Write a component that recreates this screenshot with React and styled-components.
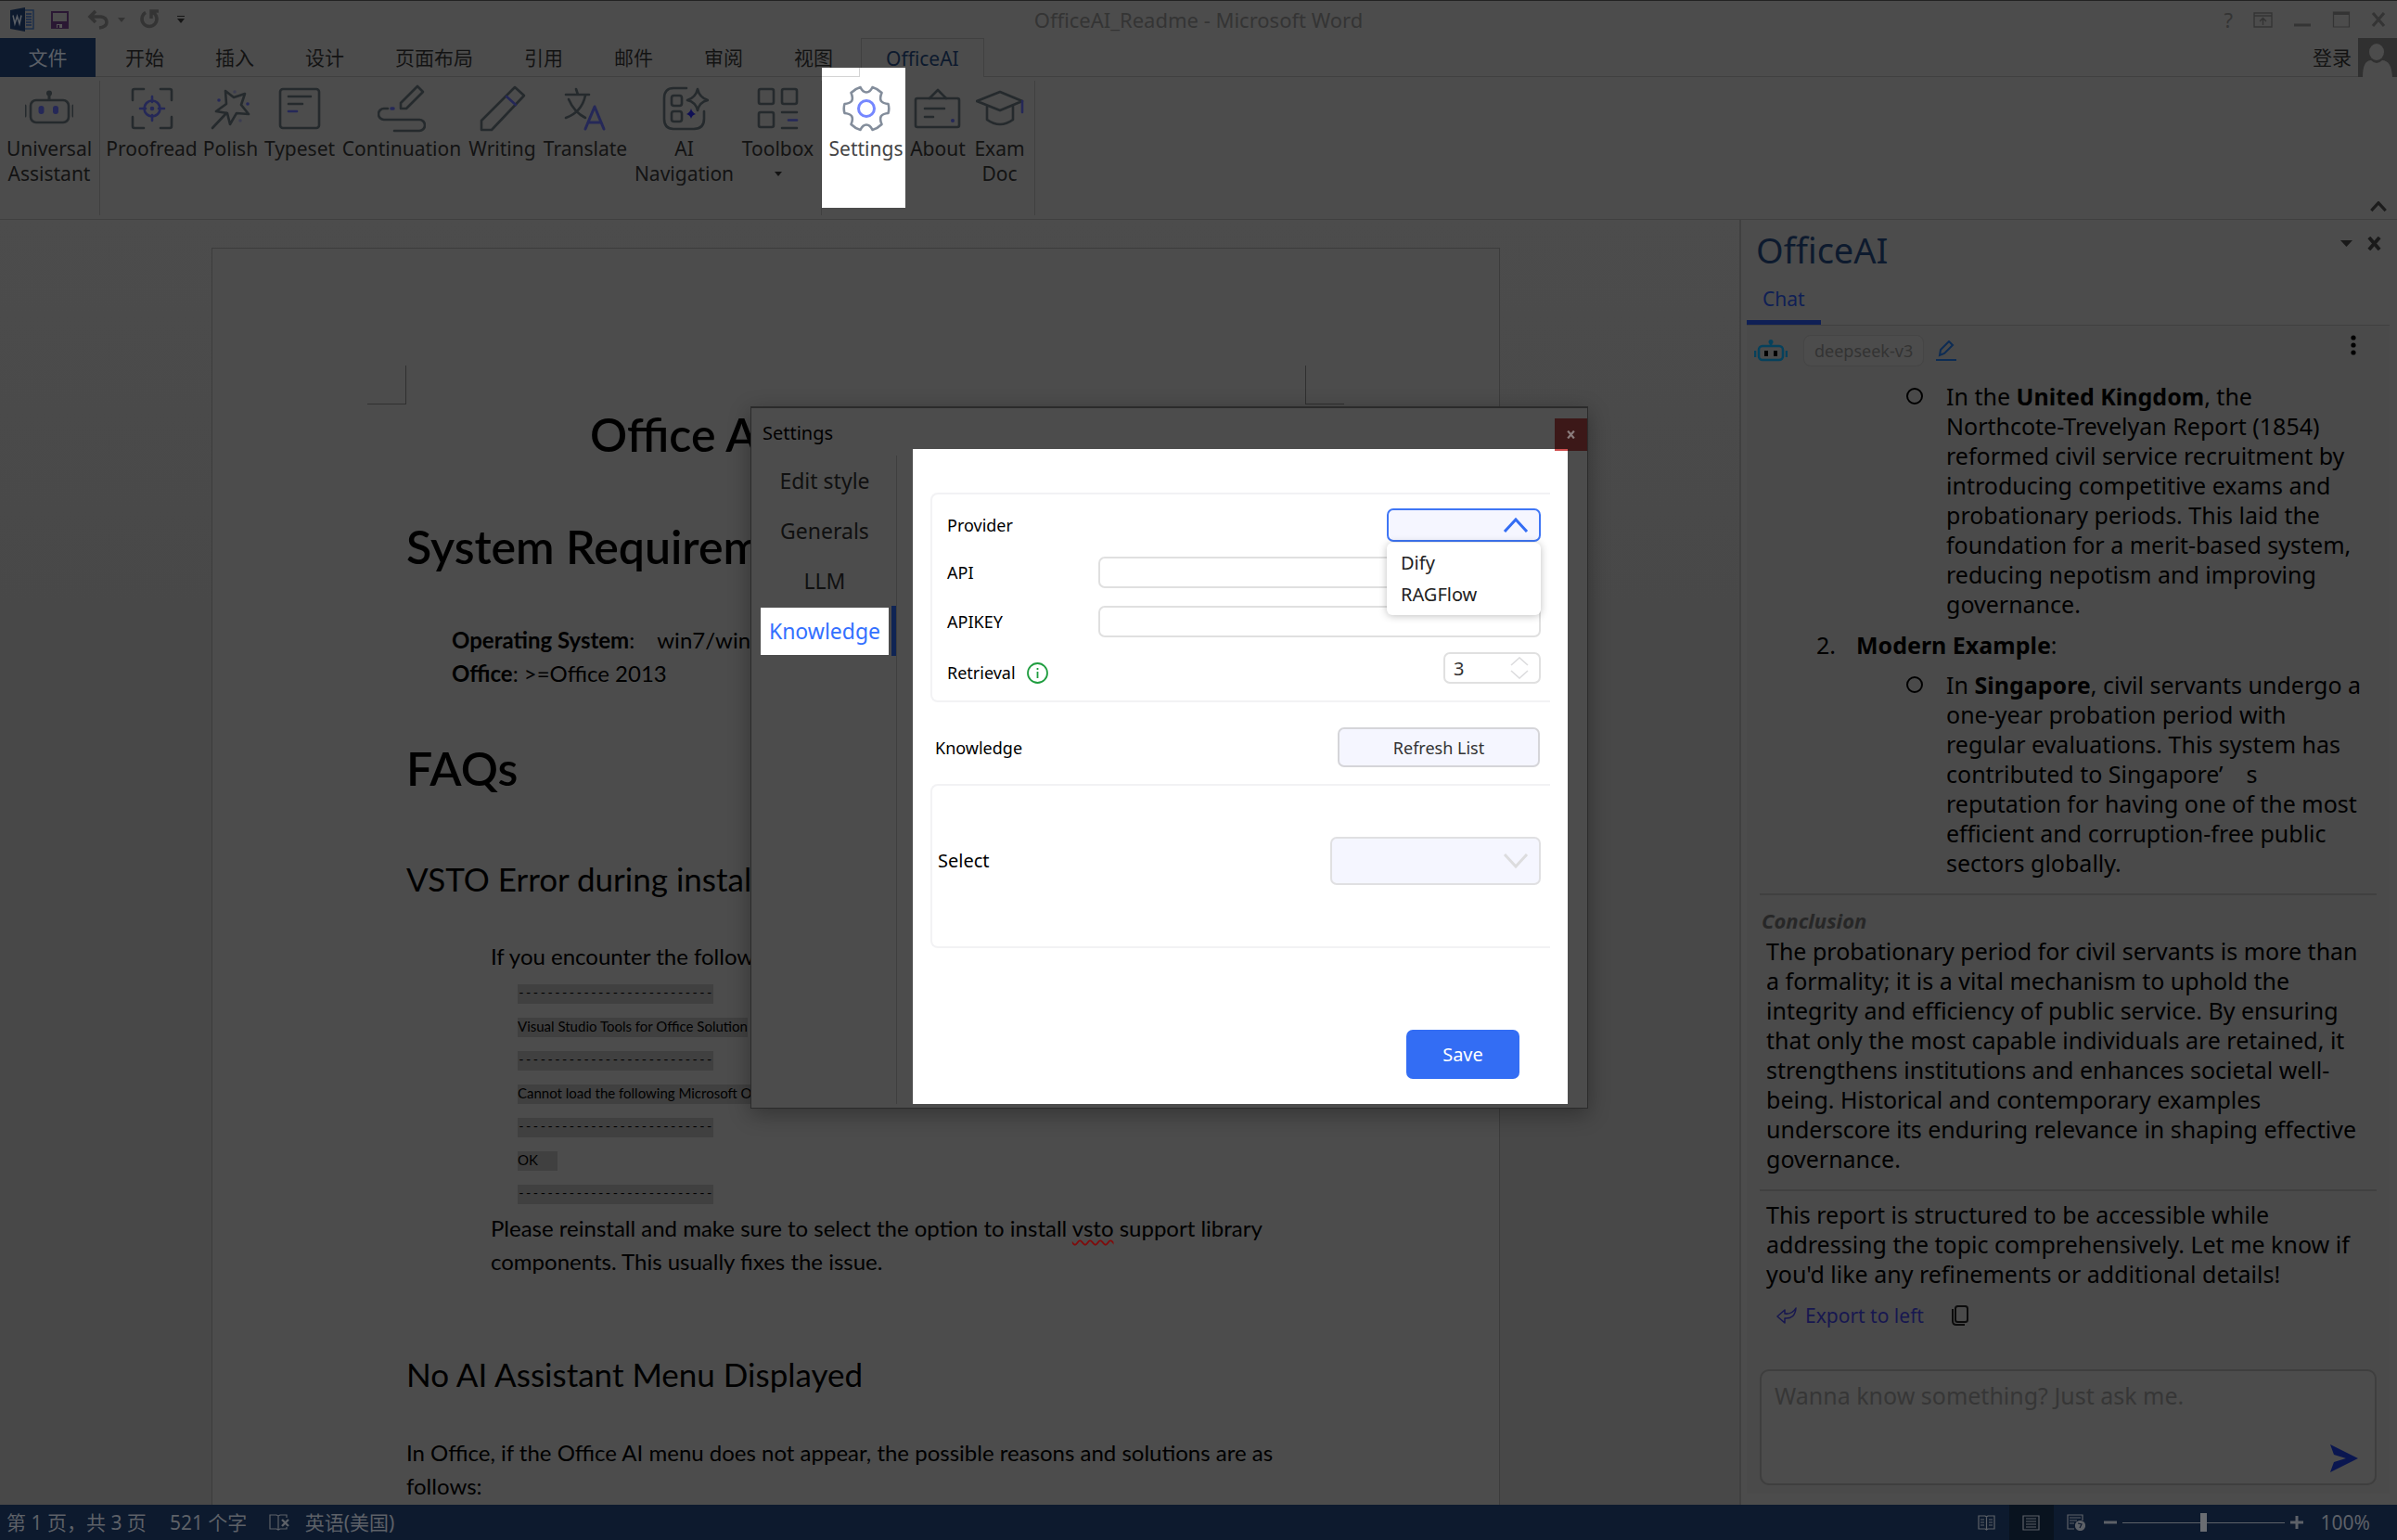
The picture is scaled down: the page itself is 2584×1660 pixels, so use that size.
import React from "react";
import styled, { createGlobalStyle, css } from "styled-components";

const UI = `"Noto Sans", "Noto Sans CJK SC", sans-serif`;
const DOC = `Lato, "Noto Sans CJK SC", sans-serif`;

const c = {
  surface: "#4c4c4c",
  line: "#404040",
  ink: "#131313",
  stroke: "#252a2d",
  accent: "#252858",
  word: "#0d1a2e",
  link: "#0f1f55",
  faint: "#333333",
  chrome: "#343434",
  statusInk: "#5d6168",
};

const GlobalStyle = createGlobalStyle`
  *, *::before, *::after { box-sizing: border-box; }
  body { margin: 0; background: ${c.surface}; font-family: ${UI}; }
  button, input, select, textarea { font: inherit; color: inherit; margin: 0; }
  button { border: 0; padding: 0; background: none; }
  h1, h2, h3, p, ul, ol { margin: 0; padding: 0; }
  ul, ol { list-style: none; }
`;

const Shell = styled.div`
  position: relative;
  display: flex;
  flex-direction: column;
  height: 100vh;
  overflow: hidden;
  border-top: 1px solid #222;
  background: ${c.surface};
  color: ${c.ink};
`;

const Svg = styled.svg`
  display: block;
  flex: none;
  fill: ${(p) => p.fill || "none"};
  stroke: ${(p) => p.stroke || "currentColor"};
  stroke-width: ${(p) => p.strokeWidth || 2};
`;

/* ---------- title bar ---------- */
const TitleBar = styled.header`
  display: grid;
  grid-template-columns: 1fr auto 1fr;
  align-items: center;
  height: 40px;
  flex: none;
  font-size: 22px;
  line-height: 28px;
  color: ${c.chrome};
`;
const QuickAccess = styled.div`
  display: flex;
  align-items: center;
  padding-left: 11px;
`;
const WindowControls = styled.div`
  display: flex;
  justify-content: flex-end;
  gap: 22px;
  padding-right: 12px;
`;
const IconButton = styled.button`
  display: flex;
  align-items: center;
  justify-content: center;
  color: ${(p) => p.$color || c.chrome};
  margin-left: ${(p) => p.$gap || 0}px;
`;

/* ---------- tabs ---------- */
const TabBar = styled.nav`
  display: flex;
  flex: none;
  height: 42px;
  border-bottom: 1px solid ${c.line};
  font-size: 21px;
  line-height: 40px;
`;
const FileTab = styled.button`
  width: 103px;
  height: 42px;
  margin-right: 5px;
  background: ${c.word};
  color: #5a5f66;
`;
const Tab = styled.button`
  padding: 0 28px 0 27px;
  height: 42px;
  ${(p) =>
    p.$active &&
    css`
      padding: 0 26px;
      margin-left: 2px;
      border: 1px solid ${c.line};
      border-bottom: 0;
      background: ${c.surface};
      color: ${c.word};
    `}
`;
const Account = styled.button`
  display: flex;
  align-items: center;
  gap: 7px;
  height: 42px;
  margin-left: auto;
`;

/* ---------- ribbon ---------- */
const Ribbon = styled.section`
  position: relative;
  display: flex;
  flex: none;
  height: 154px;
  padding: 4px 0;
  border-bottom: 1px solid ${c.line};
`;
const Group = styled.div`
  display: flex;
  align-items: flex-start;
  padding: ${(p) => p.$pad};
  border-right: 1px solid ${c.line};
`;
const Tool = styled.button`
  position: relative;
  display: flex;
  flex-direction: column;
  align-items: center;
  gap: 4px;
  width: ${(p) => p.$w}px;
  color: ${(p) => (p.$lit ? "#444" : c.ink)};
  font-size: 21px;
  line-height: 27px;
  white-space: nowrap;
  ${(p) =>
    p.$lit &&
    css`
      padding-left: 5px;
      & > * { position: relative; }
      &::before {
        content: "";
        position: absolute;
        inset: -18px 0 auto 0;
        height: 151px;
        background: #fff;
      }
      &::after {
        content: "";
        position: absolute;
        top: -18px;
        left: 0;
        width: 41px;
        height: 10px;
        border: solid #d4d4d4;
        border-width: 0 1px 1px 0;
      }
    `}
`;
const Caret = styled.span`
  width: 0;
  height: 0;
  margin-top: ${(p) => p.$top || 0}px;
  border: 4px solid transparent;
  border-top: 5px solid currentColor;
  border-bottom: 0;
`;
const Collapse = styled(IconButton)`
  margin: auto 11px 4px auto;
`;

/* ---------- workspace ---------- */
const Workspace = styled.main`
  display: flex;
  flex: 1;
  min-height: 0;
`;
const Canvas = styled.section`
  flex: 1;
  min-width: 0;
  overflow: hidden;
  padding: 30px 30px 0 0;
  display: flex;
  justify-content: center;
  background: linear-gradient(#4c4c4c, #484848 30%, #484848);
  font-family: ${DOC};
  color: #000;
`;
const Page = styled.article`
  flex: none;
  width: 1389px;
  height: 2000px;
  padding: 126px 167px 0;
  border: 1px solid #3c3c3c;
  background: ${c.surface};
`;
const CropMarks = styled.div`
  display: flex;
  justify-content: space-between;
  height: 42px;
  margin-bottom: 2px;
  &::before, &::after {
    content: "";
    width: 42px;
    border: solid #303030;
    border-width: 0 1px 1px 0;
  }
  &::after { border-width: 0 0 1px 1px; }
`;
const Body = styled.div`
  padding: 0 42px;
  font-size: 24px;
  line-height: 36px;
  font-weight: 400;
  white-space: nowrap;
  strong { font-weight: 700; }
`;
const DocTitle = styled.h1`
  padding-left: 198px;
  font-size: 50px;
  line-height: 60px;
  font-weight: 600;
`;
const Heading = styled.h2`
  margin-top: ${(p) => p.$top}px;
  font-size: 50px;
  line-height: 60px;
  font-weight: 600;
`;
const SubHeading = styled.h3`
  margin-top: ${(p) => p.$top}px;
  font-size: 35px;
  line-height: 48px;
  font-weight: 400;
`;
const Para = styled.p`
  margin-top: ${(p) => p.$top || 0}px;
  padding-left: ${(p) => p.$indent || 0}px;
`;
const CodeList = styled.ul`
  padding: 4px 0 0 120px;
  li { display: flex; align-items: center; height: 36px; }
`;
const CodeText = styled.span`
  display: block;
  min-width: 43px;
  height: 21px;
  line-height: 19px;
  background: #404040;
  font-size: ${(p) => (p.$dashes ? 13 : 15)}px;
  font-family: ${(p) => (p.$dashes ? `"Liberation Mono", monospace` : "inherit")};
`;
const Misspelt = styled.span`
  text-decoration: underline wavy #7d0d0d 2px;
  text-underline-offset: 3px;
  text-decoration-skip-ink: none;
`;

/* ---------- chat pane ---------- */
const Pane = styled.aside`
  display: flex;
  flex-direction: column;
  width: 709px;
  flex: none;
  border-left: 2px solid ${c.line};
`;
const PaneHeader = styled.div`
  display: flex;
  justify-content: space-between;
  align-items: flex-start;
  padding: 7px 17px 0 16px;
  height: 62px;
`;
const PaneTitle = styled.h2`
  font-size: 38px;
  line-height: 50px;
  font-weight: 400;
  color: ${c.word};
`;
const PaneActions = styled.div`
  display: flex;
  align-items: center;
  gap: 16px;
  padding-top: 11px;
  color: #1a1a1a;
`;
const PaneTabs = styled.div`
  margin: 0 8px 0 6px;
  border-bottom: 1px solid ${c.line};
`;
const PaneTab = styled.button`
  padding: 8px 17px;
  border-bottom: 5px solid ${c.link};
  color: ${c.link};
  font-size: 21px;
  line-height: 30px;
`;
const PaneBody = styled.div`
  flex: 1;
  display: flex;
  flex-direction: column;
  margin: 0 8px 12px 6px;
  padding: 0 14px 9px;
  background: #4a4a4a;
  color: #000;
  font-size: 25px;
  line-height: 32px;
  white-space: nowrap;
`;
const ModelRow = styled.div`
  display: flex;
  align-items: center;
  height: 54px;
  margin: 0 22px 6px -6px;
`;
const ModelChip = styled.span`
  margin: 0 13px 0 17px;
  padding: 0 11px;
  border: 1px solid #454545;
  border-radius: 8px;
  background: ${c.surface};
  color: ${c.faint};
  font-size: 18px;
  line-height: 32px;
`;
const More = styled.button`
  margin: -12px 0 0 auto;
`;
const SubItem = styled.ul`
  padding-left: 158px;
  display: flex;
  li { flex: 1; padding-left: 43px; position: relative; }
  li::before {
    content: "";
    position: absolute;
    left: 0;
    top: 7px;
    width: 18px;
    height: 18px;
    border: 2px solid #000;
    border-radius: 50%;
  }
`;
const Numbered = styled.ol`
  padding: 12px 0 11px 61px;
  li { display: flex; gap: 22px; }
`;
const Rule = styled.hr`
  width: 100%;
  height: 2px;
  margin: ${(p) => p.$m};
  border: 0;
  background: ${c.line};
`;
const Conclusion = styled.h3`
  padding-left: 2px;
  margin-bottom: 3px;
  color: #272727;
  font-size: 22px;
  line-height: 28px;
  font-style: italic;
  font-weight: 700;
`;
const ChatText = styled.p`
  padding-left: 7px;
`;
const ChatActions = styled.div`
  display: flex;
  align-items: center;
  gap: 30px;
  padding: 15px 0 0 18px;
  font-size: 21px;
  line-height: 28px;
`;
const ExportButton = styled.button`
  display: flex;
  align-items: center;
  gap: 9px;
  color: #171750;
`;
const Composer = styled.form`
  display: flex;
  height: 125px;
  margin-top: auto;
  border: 2px solid #3e3e3e;
  border-radius: 10px;
  background: ${c.surface};
`;
const Prompt = styled.textarea`
  flex: 1;
  padding: 10px 14px;
  border: 0;
  outline: 0;
  resize: none;
  background: transparent;
  line-height: 32px;
  &::placeholder { color: #363636; opacity: 1; }
`;
const Send = styled.button`
  align-self: flex-end;
  margin: 0 18px 12px 0;
`;

/* ---------- status bar ---------- */
const StatusBar = styled.footer`
  display: flex;
  align-items: center;
  flex: none;
  height: 38px;
  padding: 0 29px 0 7px;
  background: ${c.word};
  color: ${c.statusInk};
  font-size: 21px;
  line-height: 38px;
`;
const StatusItem = styled.span`
  margin-right: ${(p) => p.$gap || 0}px;
  white-space: nowrap;
`;
const Spacer = styled.span`
  flex: 1;
`;
const ViewButton = styled.button`
  display: flex;
  align-items: center;
  justify-content: center;
  width: 48px;
  height: 38px;
  background: ${(p) => (p.$active ? "#09131f" : "none")};
`;
const Zoom = styled.div`
  display: flex;
  align-items: center;
  gap: 6px;
  margin: 0 19px 0 6px;
`;
const ZoomRange = styled.input`
  appearance: none;
  width: 175px;
  height: 20px;
  background: linear-gradient(${c.statusInk}, ${c.statusInk}) center / 100% 1px no-repeat;
  &::-webkit-slider-thumb {
    appearance: none;
    width: 7px;
    height: 20px;
    background: #6a6d72;
  }
`;

/* ---------- settings dialog ---------- */
const Dialog = styled.section`
  position: absolute;
  left: 809px;
  top: 437px;
  width: 903px;
  padding-bottom: 4px;
  border: 1px solid #2b2b2b;
  border-top-width: 2px;
  background: ${c.surface};
  color: #000;
  box-shadow: 0 6px 22px rgba(0, 0, 0, 0.32);
`;
const DialogHeader = styled.header`
  height: 44px;
  padding: 10px 12px;
`;
const DialogTitle = styled.h2`
  font-size: 20px;
  line-height: 34px;
  font-weight: 400;
`;
const Close = styled.button`
  position: absolute;
  z-index: 1;
  top: 11px;
  right: 0;
  display: grid;
  place-items: center;
  width: 35px;
  height: 35px;
  background: #3c1818;
  color: #8a7b7b;
  &::after {
    content: "";
    position: absolute;
    left: 0;
    bottom: 0;
    width: 14px;
    height: 2px;
    background: #d05050;
  }
`;
const DialogBody = styled.div`
  display: flex;
  gap: 17px;
  padding-right: 21px;
`;
const Sidebar = styled.nav`
  width: 157px;
  margin-top: 7px;
  padding-left: 10px;
  border-right: 1px solid #3f3f3f;
`;
const NavItem = styled.button`
  display: flex;
  align-items: center;
  justify-content: space-between;
  width: 146px;
  height: 54px;
  font-size: 23px;
  line-height: 51px;
  color: #101010;
  border-right: 5px solid ${(p) => (p.$active ? "#0f2454" : "transparent")};
  span {
    width: 138px;
    color: ${(p) => (p.$active ? "#3370ff" : "inherit")};
    background: ${(p) => (p.$active ? "#fff" : "none")};
  }
`;
const Content = styled.form`
  flex: 1;
  display: flex;
  flex-direction: column;
  padding: 47px 19px 27px;
  background: #fff;
  font-size: 18px;
  line-height: 24px;
`;
const Panel = styled.div`
  display: flex;
  flex-direction: column;
  gap: 16px;
  padding: ${(p) => p.$pad};
  border: 2px solid #f2f2f4;
  border-right: 0;
  border-radius: 8px 0 0 8px;
`;
const Row = styled.div`
  position: relative;
  display: flex;
  align-items: ${(p) => p.$align || "center"};
  justify-content: space-between;
  padding: ${(p) => p.$pad || 0};
`;
const Label = styled.label`
  display: flex;
  align-items: center;
  gap: 12px;
  font-size: ${(p) => (p.$big ? 20 : 18)}px;
`;
const field = css`
  border: 2px solid #e0e0e0;
  border-radius: 7px;
  background: #fff;
  outline: 0;
`;
const TextInput = styled.input`
  ${field}
  width: 477px;
  height: 34px;
  padding: 0 10px;
`;
const FieldWrap = styled.span`
  position: relative;
  display: flex;
  align-items: center;
  width: ${(p) => p.$w}px;
  svg {
    position: absolute;
    right: 13px;
    color: ${(p) => (p.$open ? "#336df4" : "#dcdcde")};
    pointer-events: none;
  }
`;
const Select = styled.select`
  ${field}
  appearance: none;
  width: 100%;
  height: ${(p) => p.$h}px;
  border-color: ${(p) => (p.$open ? "#3f76f5" : "#e0e0e2")};
  background: #f5f6ff;
`;
const NumberInput = styled.input`
  ${field}
  appearance: textfield;
  width: 100%;
  height: 34px;
  padding: 0 9px;
  font-size: 20px;
  color: #333;
  &::-webkit-inner-spin-button { appearance: none; }
`;
const Menu = styled.ul`
  position: absolute;
  z-index: 2;
  top: 37px;
  right: 0;
  width: 166px;
  padding: 5px 15px;
  border-radius: 6px;
  background: #fff;
  box-shadow: 0 1px 8px rgba(0, 0, 0, 0.25);
  color: #222;
  font-size: 20px;
  line-height: 34px;
`;
const RefreshButton = styled.button`
  width: 218px;
  height: 43px;
  border: 2px solid #d5d5d9;
  border-radius: 7px;
  background: #f5f6ff;
  color: #333;
`;
const Save = styled.button`
  align-self: flex-end;
  width: 122px;
  height: 53px;
  margin: 88px 33px 0 0;
  border-radius: 7px;
  background: #336df4;
  color: #fff;
  font-size: 20px;
`;

/* ---------- drawings ---------- */
const A = c.accent;
const ToolSvg = ({ children, color = c.stroke }) => (
  <Svg width="52" height="52" viewBox="0 0 52 52" color={color} strokeLinecap="round" strokeLinejoin="round" strokeWidth="2.6" aria-hidden="true">
    {children}
  </Svg>
);

const icons = {
  robot: (
    <ToolSvg>
      <rect x="6" y="17" width="41" height="24" rx="6" />
      <path d="M26 16v-4M0 23v11M52 23v11" strokeWidth="3" />
      <circle cx="26" cy="9.500" r="3" fill="currentColor" stroke="none" />
      <rect x="14.500" y="23" width="6" height="9" rx="3" fill={A} stroke="none" />
      <rect x="30" y="23" width="6" height="9" rx="3" fill={A} stroke="none" />
    </ToolSvg>
  ),
  proofread: (
    <ToolSvg>
      <path d="M5 17V7q0-2 2-2h10M35 5h10q2 0 2 2v10M47 35v10q0 2-2 2H35M17 47H7q-2 0-2-2V35" />
      <g stroke={A}>
        <circle cx="26" cy="26" r="8.500" />
        <path d="M26 13v6M26 33v6M13 26h6M33 26h6" />
        <circle cx="26" cy="26" r="1" />
      </g>
    </ToolSvg>
  ),
  polish: (
    <ToolSvg>
      <path d="M20 7l9 7 12-4-4 12 8 10-13-1-7 12-3-12-12-2 11-8z" />
      <path d="M21 31L6 47" />
      <g fill={A} stroke="none">
        <circle cx="13" cy="17" r="1.800" /><circle cx="44" cy="21" r="1.800" />
        <circle cx="30" cy="8" r="1.800" opacity=".4" /><circle cx="36" cy="39" r="1.800" opacity=".4" />
      </g>
    </ToolSvg>
  ),
  typeset: (
    <ToolSvg>
      <rect x="5" y="5" width="42" height="42" rx="3" />
      <path d="M14 13h24M14 21h15" />
      <path d="M14 29h9" stroke={A} />
    </ToolSvg>
  ),
  continuation: (
    <ToolSvg>
      <path d="M11 26H7a6 6 0 0 0 0 12h38a5 5 0 0 1 0 12H18" />
      <path d="M25 26v-6L43 2l6 6-18 18z" />
      <path d="M15 26h2" stroke={A} strokeWidth="3.500" />
    </ToolSvg>
  ),
  writing: (
    <ToolSvg>
      <path d="M3 49V39L39 3l10 9-35 37z" />
      <path d="M30 13l10 9" stroke={A} />
    </ToolSvg>
  ),
  translate: (
    <ToolSvg>
      <path d="M5 11h25M16 5l2 6M8 16q6 14 18 20M26 12Q22 30 5 36" />
      <path d="M26 48l10-24 10 24M29 41h14" stroke={A} strokeWidth="3" />
    </ToolSvg>
  ),
  navigation: (
    <ToolSvg>
      <path d="M28 4H14Q4 4 4 15v22q0 11 10 11h22q11 0 11-11v-8" />
      <rect x="12" y="12" width="11" height="11" rx="2.500" />
      <rect x="12" y="29" width="11" height="11" rx="2.500" />
      <path d="M40 5q2 9 11 12-9 2-11 11-2-9-11-11 9-3 11-12z" />
      <path d="M33 26q1 4 5 6-4 1-5 5-1-4-5-5 4-2 5-6z" fill="#0f0f55" stroke="none" />
    </ToolSvg>
  ),
  toolbox: (
    <ToolSvg>
      <rect x="5" y="5" width="16" height="16" rx="2" />
      <rect x="30" y="5" width="16" height="16" rx="2" />
      <rect x="5" y="30" width="16" height="16" rx="2" />
      <path d="M30 30h16M30 47h16" />
      <path d="M37 38.500h9" stroke={A} />
    </ToolSvg>
  ),
  settings: (
    <ToolSvg color="#838d9b">
      <path d="M19.500 3q2.500 5.500 6.500 5.500T32.500 3Q38 4.500 42.500 9 40 15 42 18q2 2.500 7.500 3 1.500 5 0 10Q44 31.500 42 34q-2 3 .5 9-4.500 4.500-10 6-2.500-5.500-6.500-5.500T19.500 49Q14 47.500 9.500 43q2.500-6 .5-9-2-2.500-7.500-3Q1 26 2.500 21 8 20.500 10 18q2-3-.5-9 4.500-4.500 10-6z" />
      <circle cx="26" cy="26" r="8.500" stroke="#7587ff" strokeWidth="3" />
    </ToolSvg>
  ),
  about: (
    <ToolSvg>
      <rect x="2" y="15" width="47" height="31" rx="2" />
      <path d="M17 15l9-9 9 9M12 26h21M12 35h9" />
      <circle cx="42" cy="39" r="2" fill={A} stroke="none" />
    </ToolSvg>
  ),
  exam: (
    <ToolSvg>
      <path d="M1 18L26 8l24 10-24 10zM12 23v15q14 10 28 0V23" />
      <path d="M50 18v12" stroke={A} />
    </ToolSvg>
  ),
};

const Chevron = ({ up, w = 28, h = 16, t = 3 }) => (
  <Svg width={w} height={h} viewBox="0 0 28 16" strokeWidth={t} aria-hidden="true">
    <path d={up ? "M2 15L14 2l12 13" : "M2 1l12 13L26 1"} />
  </Svg>
);

const Cross = ({ size = 16, t = 3 }) => (
  <Svg width={size} height={size} viewBox="0 0 16 16" strokeWidth={t} aria-hidden="true">
    <path d="M2 1l12 14M14 1L2 15" />
  </Svg>
);

const toolGroups = [
  { pad: "4px 1px 0 0", tools: [{ icon: "robot", w: 106, lines: ["Universal", "Assistant"] }] },
  {
    pad: "4px 3px",
    tools: [
      { icon: "proofread", w: 105, lines: ["Proofread"] },
      { icon: "polish", w: 65, lines: ["Polish"] },
      { icon: "typeset", w: 84, lines: ["Typeset"] },
      { icon: "continuation", w: 136, lines: ["Continuation"] },
      { icon: "writing", w: 81, lines: ["Writing"] },
      { icon: "translate", w: 98, lines: ["Translate"] },
      { icon: "navigation", w: 115, lines: ["AI", "Navigation"] },
      { icon: "toolbox", w: 87, lines: ["Toolbox"], caret: true },
    ],
  },
  {
    pad: "4px 6px 0 0",
    tools: [
      { icon: "settings", w: 90, lines: ["Settings"], lit: true },
      { icon: "about", w: 70, lines: ["About"] },
      { icon: "exam", w: 63, lines: ["Exam", "Doc"] },
    ],
  },
];

const tabs = ["开始", "插入", "设计", "页面布局", "引用", "邮件", "审阅", "视图"];
const DASHES = "---------------------------";
const codeRows = [DASHES, "Visual Studio Tools for Office Solution", DASHES, "Cannot load the following Microsoft Office", DASHES, "OK", DASHES];

const Lines = ({ of }) =>
  of.map((line, i) => (
    <React.Fragment key={i}>
      {i > 0 && <br />}
      {line}
    </React.Fragment>
  ));

export default function App() {
  return (
    <Shell>
      <GlobalStyle />
      <TitleBar>
        <QuickAccess>
          <Svg width="26" height="26" viewBox="0 0 26 26" strokeWidth="1.500" aria-hidden="true">
            <path d="M14 3h11v20H14z" stroke="#1d2f4a" />
            <path d="M17 7h6M17 10h6M17 13h6M17 16h6M17 19h6" stroke="#15294a" />
            <path d="M0 3l16-3v26L0 23z" fill={c.word} stroke="none" />
            <path d="M3 8.500l2 9 2.500-8 2.500 8 2-9" stroke="#5a5f66" />
          </Svg>
          <IconButton aria-label="Save document" $gap={18} $color="#2a1833">
            <Svg width="19" height="19" viewBox="0 0 19 19">
              <path d="M1 1h17v17H1z" />
              <path d="M1 12h17v6H1z" fill="currentColor" />
              <path d="M6 14h6v4H6z" fill="#555" stroke="none" />
              <path d="M8 15v3" />
            </Svg>
          </IconButton>
          <IconButton aria-label="Undo" $gap={20}>
            <Svg width="24" height="22" viewBox="0 0 24 22" strokeWidth="3.500">
              <path d="M9 2L3 8l6 6M3 8h12q6 1 6 6t-8 6" />
            </Svg>
          </IconButton>
          <IconButton aria-label="Undo history" $gap={9}><Caret /></IconButton>
          <IconButton aria-label="Redo" $gap={15}>
            <Svg width="22" height="22" viewBox="0 0 22 22" strokeWidth="3.500">
              <path d="M7 3.500a8 8 0 1 0 8 0M13 10V2h8" />
            </Svg>
          </IconButton>
          <IconButton aria-label="Customize toolbar" $gap={19} $color="#161616">
            <Svg width="8" height="8" viewBox="0 0 8 8" strokeWidth="1">
              <path d="M0 .5h8" /><path d="M0 3h8L4 8z" fill="currentColor" stroke="none" />
            </Svg>
          </IconButton>
        </QuickAccess>
        <span>OfficeAI_Readme - Microsoft Word</span>
        <WindowControls>
          <IconButton aria-label="Help">?</IconButton>
          <IconButton aria-label="Ribbon display options">
            <Svg width="21" height="17" viewBox="0 0 21 17" strokeWidth="1.300"><path d="M1 1h19v15H1zM1 4h19M10.500 14V7M7 10l3.500-3.500L14 10" /></Svg>
          </IconButton>
          <IconButton aria-label="Minimize">
            <Svg width="20" height="17" viewBox="0 0 20 17" strokeWidth="3"><path d="M1 14h18" /></Svg>
          </IconButton>
          <IconButton aria-label="Maximize">
            <Svg width="20" height="18" viewBox="0 0 20 18" strokeWidth="1.200"><path d="M1.500 1h17v16h-17z" /><path d="M1 2.500h18" strokeWidth="3" /></Svg>
          </IconButton>
          <IconButton aria-label="Close window"><Cross /></IconButton>
        </WindowControls>
      </TitleBar>

      <TabBar>
        <FileTab>文件</FileTab>
        {tabs.map((t) => <Tab key={t}>{t}</Tab>)}
        <Tab $active>OfficeAI</Tab>
        <Account>
          登录
          <Svg width="42" height="42" viewBox="0 0 42 42" stroke="none" aria-hidden="true">
            <path d="M0 0h42v42H0z" fill="#303030" />
            <ellipse cx="20" cy="15" rx="8" ry="9" fill={c.surface} />
            <path d="M5 42q0-18 9-18 6 6 12 0 10 0 11 18z" fill={c.surface} />
          </Svg>
        </Account>
      </TabBar>

      <Ribbon>
        {toolGroups.map((g, i) => (
          <Group key={i} $pad={g.pad}>
            {g.tools.map((t) => (
              <Tool key={t.icon} $w={t.w} $lit={t.lit}>
                {icons[t.icon]}
                <span><Lines of={t.lines} /></span>
                {t.caret && <Caret $top={7} />}
              </Tool>
            ))}
          </Group>
        ))}
        <Collapse aria-label="Collapse ribbon" $color="#1c1c1c"><Chevron up w={18} h={11} t={5} /></Collapse>
      </Ribbon>

      <Workspace>
        <Canvas>
          <Page>
            <CropMarks />
            <Body>
              <DocTitle>Office AI</DocTitle>
              <Heading $top={61}>System Requirements</Heading>
              <Para $top={53} $indent={49}>
                <strong>Operating System</strong>:&nbsp;&nbsp; &nbsp;win7/win10
                <br />
                <strong>Office</strong>: &gt;=Office 2013
              </Para>
              <Heading $top={54}>FAQs</Heading>
              <SubHeading $top={65}>VSTO Error during installation</SubHeading>
              <Para $top={42} $indent={91}>If you encounter the following</Para>
              <CodeList>
                {codeRows.map((r, i) => <li key={i}><CodeText $dashes={r === DASHES}>{r}</CodeText></li>)}
              </CodeList>
              <Para $top={1} $indent={91}>
                Please reinstall and make sure to select the option to install <Misspelt>vsto</Misspelt> support library
                <br />
                components. This usually fixes the issue.
              </Para>
              <SubHeading $top={79}>No AI Assistant Menu Displayed</SubHeading>
              <Para $top={43}>
                In Office, if the Office AI menu does not appear, the possible reasons and solutions are as
                <br />
                follows:
              </Para>
            </Body>
          </Page>
        </Canvas>

        <Pane>
          <PaneHeader>
            <PaneTitle>OfficeAI</PaneTitle>
            <PaneActions>
              <IconButton aria-label="Pane options" $color="#1a1a1a">
                <Svg width="13" height="7" viewBox="0 0 13 7" stroke="none"><path d="M0 0h13L6.500 7z" fill="currentColor" /></Svg>
              </IconButton>
              <IconButton aria-label="Close pane" $color="#1a1a1a"><Cross size={15} t={4} /></IconButton>
            </PaneActions>
          </PaneHeader>
          <PaneTabs><PaneTab>Chat</PaneTab></PaneTabs>
          <PaneBody>
            <ModelRow>
              <Svg width="36" height="24" viewBox="0 0 36 24" color="#06415c" aria-hidden="true">
                <rect x="5" y="7" width="26" height="15" rx="4" strokeWidth="2.500" />
                <path d="M18 6V3M1 12v7M35 12v7" strokeWidth="2.500" />
                <circle cx="18" cy="2.500" r="2.500" fill="currentColor" stroke="none" />
                <path d="M13 12v6M23 12v6" stroke="#000" strokeWidth="4" />
              </Svg>
              <ModelChip>deepseek-v3</ModelChip>
              <IconButton aria-label="Edit model" $color="#0d2c54">
                <Svg width="22" height="22" viewBox="0 0 22 22"><path d="M4 16l1-6 9-9 4 4-9 9zM0 21h22" /></Svg>
              </IconButton>
              <More aria-label="More">
                <Svg width="6" height="22" viewBox="0 0 6 22" fill="#000" stroke="none">
                  <circle cx="3" cy="3" r="2.600" /><circle cx="3" cy="11" r="2.600" /><circle cx="3" cy="19" r="2.600" />
                </Svg>
              </More>
            </ModelRow>
            <SubItem>
              <li>
                In the <strong>United Kingdom</strong>, the
                <br />
                <Lines of={["Northcote-Trevelyan Report (1854)", "reformed civil service recruitment by", "introducing competitive exams and", "probationary periods. This laid the", "foundation for a merit-based system,", "reducing nepotism and improving", "governance."]} />
              </li>
            </SubItem>
            <Numbered>
              <li><span>2.</span><span><strong>Modern Example</strong>:</span></li>
            </Numbered>
            <SubItem>
              <li>
                In <strong>Singapore</strong>, civil servants undergo a
                <br />
                <Lines of={["one-year probation period with", "regular evaluations. This system has", "contributed to Singapore’\u2003s", "reputation for having one of the most", "efficient and corruption-free public", "sectors globally."]} />
              </li>
            </SubItem>
            <Rule $m="17px 0 13px" />
            <Conclusion>Conclusion</Conclusion>
            <ChatText>
              <Lines of={["The probationary period for civil servants is more than", "a formality; it is a vital mechanism to uphold the", "integrity and efficiency of public service. By ensuring", "that only the most capable individuals are retained, it", "strengthens institutions and enhances societal well-", "being. Historical and contemporary examples", "underscore its enduring relevance in shaping effective", "governance."]} />
            </ChatText>
            <Rule $m="17px 0 9px" />
            <ChatText>
              <Lines of={["This report is structured to be accessible while", "addressing the topic comprehensively. Let me know if", "you'd like any refinements or additional details!"]} />
            </ChatText>
            <ChatActions>
              <ExportButton>
                <Svg width="22" height="18" viewBox="0 0 22 18" strokeWidth="1.500" strokeLinejoin="round" aria-hidden="true">
                  <path d="M1 10l8-7v4q8 1 12-6-1 12-12 11v5z" />
                </Svg>
                Export to left
              </ExportButton>
              <IconButton aria-label="Copy" $color="#0c0c0c">
                <Svg width="18" height="22" viewBox="0 0 18 22"><rect x="4" y="1" width="13" height="17" rx="2.500" /><path d="M1 4v13q0 4 4 4h9" /></Svg>
              </IconButton>
            </ChatActions>
            <Composer>
              <Prompt aria-label="Message" placeholder="Wanna know something? Just ask me." />
              <Send type="button" aria-label="Send">
                <Svg width="30" height="30" viewBox="0 0 30 30" stroke="none"><path d="M0 0l30 15L0 30l4-11 13-4L4 11z" fill="#0a1650" /></Svg>
              </Send>
            </Composer>
          </PaneBody>
        </Pane>
      </Workspace>

      <StatusBar>
        <StatusItem $gap={25}>第 1 页，共 3 页</StatusItem>
        <StatusItem $gap={24}>521 个字</StatusItem>
        <Svg width="22" height="18" viewBox="0 0 22 18" strokeWidth="1.200" aria-hidden="true">
          <path d="M10 17V2L8 1H1v15h7l2 1 2-1h7v-2M10 2l2-1h7v3" />
          <path d="M14 6l7 7M21 6l-7 7" strokeWidth="2.400" />
        </Svg>
        <StatusItem>&nbsp;&nbsp; 英语(美国)</StatusItem>
        <Spacer />
        <ViewButton aria-label="Read mode">
          <Svg width="19" height="17" viewBox="0 0 19 17" strokeWidth="1.200"><path d="M9.500 2v14M1 1h7l1.500 1L11 1h7v14h-7l-1.500 1L8 15H1zM3 5h4M3 8h4M3 11h4M12 5h4M12 8h4M12 11h4" /></Svg>
        </ViewButton>
        <ViewButton $active aria-label="Print layout">
          <Svg width="19" height="17" viewBox="0 0 19 17" strokeWidth="1.200"><path d="M1 1h17v15H1zM4 4h11M4 7h11M4 10h11M4 13h11" /></Svg>
        </ViewButton>
        <ViewButton aria-label="Web layout">
          <Svg width="20" height="18" viewBox="0 0 20 18" strokeWidth="1.200"><path d="M8 16H1V1h16v6M3 4h12M3 7h8M3 10h5" /><circle cx="14.500" cy="12.500" r="5" fill="currentColor" /><path d="M12 10l4 1-2 4" stroke={c.word} /></Svg>
        </ViewButton>
        <Zoom>
          <IconButton aria-label="Zoom out" $color={c.statusInk}>
            <Svg width="14" height="14" viewBox="0 0 14 14" strokeWidth="3"><path d="M0 7h14" /></Svg>
          </IconButton>
          <ZoomRange type="range" aria-label="Zoom" min="10" max="190" defaultValue="100" />
          <IconButton aria-label="Zoom in" $color={c.statusInk}>
            <Svg width="14" height="14" viewBox="0 0 14 14" strokeWidth="3"><path d="M0 7h14M7 0v14" /></Svg>
          </IconButton>
        </Zoom>
        <span>100%</span>
      </StatusBar>

      <Dialog role="dialog" aria-labelledby="settings-title">
        <DialogHeader>
          <DialogTitle id="settings-title">Settings</DialogTitle>
        </DialogHeader>
        <Close aria-label="Close settings"><Cross size={9} t={4} /></Close>
        <DialogBody>
          <Sidebar>
            {["Edit style", "Generals", "LLM", "Knowledge"].map((n) => (
              <NavItem key={n} $active={n === "Knowledge"}><span>{n}</span></NavItem>
            ))}
          </Sidebar>
          <Content>
            <Panel $pad="15px 10px 18px 16px">
              <Row>
                <Label htmlFor="provider">Provider</Label>
                <FieldWrap $w={166} $open>
                  <Select id="provider" $h={36} $open defaultValue="">
                    <option value="" />
                    <option>Dify</option>
                    <option>RAGFlow</option>
                  </Select>
                  <Chevron up />
                </FieldWrap>
                <Menu>
                  <li>Dify</li>
                  <li>RAGFlow</li>
                </Menu>
              </Row>
              <Row>
                <Label htmlFor="api">API</Label>
                <TextInput id="api" />
              </Row>
              <Row $pad="3px 0 0">
                <Label htmlFor="apikey">APIKEY</Label>
                <TextInput id="apikey" />
              </Row>
              <Row $align="flex-end">
                <Label htmlFor="retrieval">
                  Retrieval
                  <Svg width="23" height="23" viewBox="0 0 23 23" color="#1f9d3f" strokeWidth="1.800" aria-hidden="true">
                    <circle cx="11.500" cy="11.500" r="10.500" /><path d="M11.500 10v7M11.500 6v2" />
                  </Svg>
                </Label>
                <FieldWrap $w={105}>
                  <NumberInput id="retrieval" type="number" defaultValue="3" />
                  <Svg width="20" height="24" viewBox="0 0 20 24" strokeWidth="1.600" aria-hidden="true"><path d="M1 9l9-8 9 8M1 15l9 8 9-8" /></Svg>
                </FieldWrap>
              </Row>
            </Panel>
            <Row $pad="27px 11px 18px 5px">
              <span>Knowledge</span>
              <RefreshButton type="button">Refresh List</RefreshButton>
            </Row>
            <Panel $pad="55px 10px 66px 6px">
              <Row>
                <Label htmlFor="knowledge" $big>Select</Label>
                <FieldWrap $w={227}>
                  <Select id="knowledge" $h={52} defaultValue=""><option value="" /></Select>
                  <Chevron />
                </FieldWrap>
              </Row>
            </Panel>
            <Save type="button">Save</Save>
          </Content>
        </DialogBody>
      </Dialog>
    </Shell>
  );
}
